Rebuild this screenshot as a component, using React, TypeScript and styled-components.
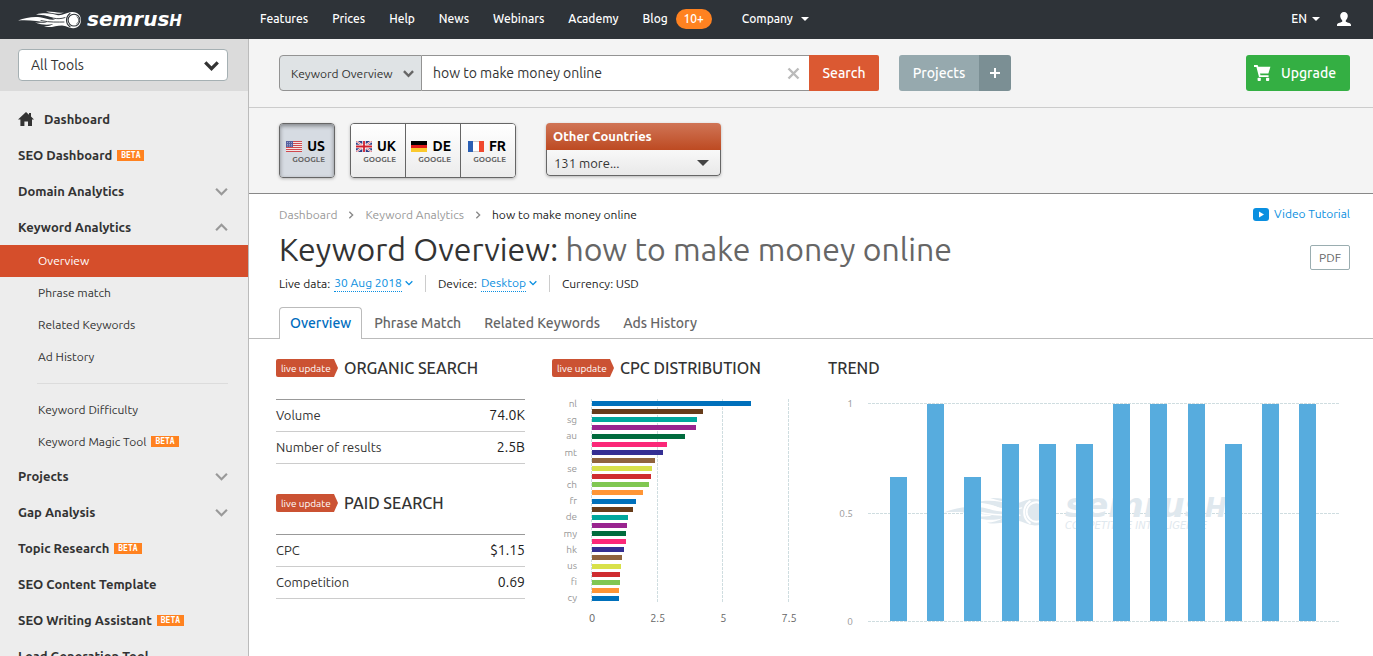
import React from "react";
import styled, { createGlobalStyle, css } from "styled-components";

const GlobalStyle = createGlobalStyle`
  *, *::before, *::after { box-sizing: border-box; }
  body {
    margin: 0;
    background: #fff;
    color: #333;
    font-family: Ubuntu, "Noto Sans", "Open Sans", sans-serif;
    font-size: 12px;
  }
  button, input, select { font-family: inherit; }
  a { color: inherit; text-decoration: none; }
`;

/* ---------- page frame ---------- */

const Page = styled.div`
  display: flex;
  flex-direction: column;
  height: 100vh;
  overflow: hidden;
`;

const Body = styled.div`
  flex: 1;
  min-height: 0;
  display: grid;
  grid-template-columns: 249px 1fr;
`;

/* ---------- top bar ---------- */

const TopBar = styled.header`
  flex: none;
  display: flex;
  align-items: center;
  height: 39px;
  padding: 0 22px 2px 18px;
  background: #2e3338;
  color: #fff;
`;

const LogoLink = styled.a`
  display: flex;
  align-items: center;
  gap: 5px;
  width: 242px;
  padding-top: 2px;
`;

const Wordmark = styled.span`
  font: italic bold 20px/20px "DejaVu Sans", sans-serif;
`;

const WordmarkCap = styled.span`
  font-size: 15px;
`;

const Nav = styled.nav`
  flex: 1;
  display: flex;
  align-items: center;
  gap: 24px;
`;

const NavLink = styled.a`
  display: inline-flex;
  align-items: center;
  gap: 8px;
  font-size: 12px;
  font-weight: 500;
`;

const CountBadge = styled.span`
  display: inline-block;
  width: 36px;
  margin-right: 6px;
  border-radius: 10px;
  background: #ff8220;
  font-size: 12px;
  line-height: 20px;
  text-align: center;
`;

const TopButton = styled.button`
  display: inline-flex;
  align-items: center;
  gap: 5px;
  margin-left: 17px;
  padding: 0;
  border: 0;
  background: none;
  color: #fff;
  font-size: 12px;
  font-weight: 500;
`;

/* ---------- sidebar ---------- */

const Sidebar = styled.aside`
  min-height: 0;
  overflow-y: auto;
  scrollbar-width: none;
  border-right: 1px solid #bbb;
  background: #ededed;
`;

const ToolPicker = styled.div`
  padding: 10px 20px 10px 18px;
  background: #dbdbdb;
`;

const SelectBox = styled.div`
  position: relative;
  display: grid;
  align-items: center;
  svg { position: absolute; right: 9px; pointer-events: none; }
`;

const ToolSelect = styled.select`
  appearance: none;
  width: 100%;
  height: 32px;
  padding: 0 12px;
  border: 1px solid #a5b0b3;
  border-radius: 4px;
  background: #fff;
  color: #333;
  font-size: 14px;
`;

const SideList = styled.ul`
  list-style: none;
  margin: 0;
  padding: 0;
`;

const SideLink = styled.a`
  display: flex;
  align-items: center;
  gap: 10px;
  height: 36px;
  padding: 0 20px 0 18px;
  font-size: 13px;
  font-weight: 700;
  color: #333;
`;

const SideText = styled.span`
  flex: 1;
  display: flex;
  align-items: center;
`;

const SubLink = styled.a<{ $active?: boolean }>`
  display: flex;
  align-items: center;
  height: 32px;
  padding: 0 0 2px 38px;
  font-size: 12px;
  color: ${(p) => (p.$active ? "#fff" : "#333")};
  background: ${(p) => (p.$active ? "#d54e2b" : "transparent")};
`;

const SideDivider = styled.li`
  height: 1px;
  margin: 10px 20px 10px 37px;
  background: #dcdcdc;
`;

const Beta = styled.span`
  margin-left: 5px;
  padding: 0 4px;
  background: #ff8220;
  color: #fff;
  font: bold 8px/11px "DejaVu Sans Mono", monospace;
`;

const SideSpace = styled.div`
  height: 10px;
`;

/* ---------- main column ---------- */

const Main = styled.main`
  min-width: 0;
  min-height: 0;
  overflow: hidden;
`;

const SearchBar = styled.form`
  display: flex;
  padding: 16px 23px 16px 30px;
  border-bottom: 1px solid #ccc;
  background: #f4f4f4;
`;

const ScopeBox = styled(SelectBox)`
  width: 143px;
  svg { right: 8px; }
`;

const ScopeSelect = styled.select`
  appearance: none;
  width: 100%;
  height: 36px;
  padding: 0 11px;
  border: 1px solid #939393;
  border-radius: 4px 0 0 4px;
  background: #dfe3e5;
  color: #333;
  font-size: 12px;
`;

const QueryBox = styled.div`
  flex: 0 1 387px;
  display: flex;
  align-items: center;
  height: 36px;
  padding: 0 9px 0 11px;
  border: solid #939393;
  border-width: 1px 0;
  background: #fff;
`;

const QueryInput = styled.input`
  flex: 1;
  min-width: 0;
  padding: 0;
  border: 0;
  outline: 0;
  color: #333;
  font-size: 14px;
`;

const ClearButton = styled.button`
  display: flex;
  padding: 0;
  border: 0;
  background: none;
`;

const BarButton = styled.button<{ $bg: string; $width: number; $radius: string }>`
  flex: none;
  display: flex;
  align-items: center;
  justify-content: center;
  gap: 10px;
  width: ${(p) => p.$width}px;
  height: 36px;
  padding: 0;
  border: 0;
  border-radius: ${(p) => p.$radius};
  background: ${(p) => p.$bg};
  color: #fff;
  font-size: 14px;
  font-weight: 500;
`;

const UpgradeButton = styled(BarButton)`
  justify-content: flex-start;
  padding-left: 8px;
`;

const ButtonGroup = styled.div`
  display: flex;
  margin: 0 auto 0 20px;
`;

const Countries = styled.section`
  display: flex;
  align-items: flex-start;
  padding: 15px 30px;
  border-bottom: 1px solid #888;
  background: #f4f4f4;
`;

const CountryGroup = styled.div`
  display: flex;
  margin-right: 15px;
  border: 1px solid #666;
  border-radius: 4px;
  overflow: hidden;
  box-shadow: 0 1px 3px rgba(0, 0, 0, 0.25);
  & + & { margin-right: 30px; }
`;

const Country = styled.button<{ $selected?: boolean }>`
  display: flex;
  flex-direction: column;
  align-items: flex-end;
  justify-content: center;
  width: 54px;
  height: 53px;
  padding: 2px 9px 0 0;
  border: 0;
  background: linear-gradient(#fff, #ececec);
  & + & {
    width: 55px;
    border-left: 1px solid #666;
  }
  ${(p) =>
    p.$selected &&
    css`
      background: #d6dbe2;
      box-shadow: inset 0 2px 4px rgba(0, 0, 0, 0.4);
    `}
`;

const CountryCode = styled.span`
  display: flex;
  align-items: center;
  gap: 5px;
  color: #000;
  font-size: 14px;
  line-height: 16px;
  font-weight: 700;
`;

const Engine = styled.span`
  color: #666;
  font-size: 8px;
  line-height: 11px;
  font-weight: 700;
`;

const OtherCountries = styled.div`
  width: 175px;
  border-radius: 4px;
  overflow: hidden;
  box-shadow: 0 1px 3px rgba(0, 0, 0, 0.25);
`;

const OtherTitle = styled.label`
  display: block;
  padding: 0 7px;
  background: linear-gradient(#d07556, #bd4a22);
  color: #fff;
  font-size: 13px;
  line-height: 27px;
  font-weight: 700;
`;

const OtherSelect = styled.select`
  appearance: none;
  width: 100%;
  height: 26px;
  padding: 0 7px;
  border: 1px solid #666;
  border-top: 0;
  border-radius: 0 0 4px 4px;
  background: linear-gradient(#f8f8f8, #e9e9e9);
  color: #333;
  font-size: 13px;
`;

const OtherBox = styled(SelectBox)`
  svg { right: 12px; }
`;

/* ---------- report heading ---------- */

const Heading = styled.div`
  padding: 10px 23px 0 30px;
`;

const HeadRow = styled.div`
  display: flex;
  align-items: flex-start;
  justify-content: space-between;
`;

const Crumbs = styled.nav`
  display: flex;
  align-items: center;
  gap: 10px;
  font-size: 12px;
  line-height: 22px;
  color: #222;
  a { color: #999; }
`;

const VideoLink = styled.a`
  display: flex;
  align-items: center;
  gap: 5px;
  color: #0a8fe0;
  font-size: 12px;
  line-height: 20px;
`;

const Title = styled.h1`
  margin: 0;
  color: #333;
  font-size: 32px;
  line-height: 46px;
  font-weight: 400;
  white-space: nowrap;
  span { color: #666; }
`;

const PdfButton = styled.button`
  width: 40px;
  height: 25px;
  margin-top: 19px;
  padding: 0;
  border: 1px solid #9aadb0;
  border-radius: 2px;
  background: #fff;
  color: #666;
  font-size: 12px;
`;

const Meta = styled.div`
  display: flex;
  align-items: center;
  height: 18px;
  margin-top: 2px;
  color: #222;
  font-size: 12px;
`;

const MetaItem = styled.span`
  display: inline-flex;
  align-items: center;
  line-height: 17px;
  & + & {
    margin-left: 12px;
    padding-left: 12px;
    border-left: 1px solid #ccc;
  }
`;

const MetaPick = styled.button`
  display: inline-flex;
  align-items: center;
  gap: 3px;
  margin-left: 4px;
  padding: 0;
  border: 0;
  background: none;
  color: #0a8fe0;
  font-size: 12px;
  line-height: 16px;
  span { border-bottom: 1px dotted #0a8fe0; }
`;

const Tabs = styled.nav`
  display: flex;
  gap: 1px;
  height: 32px;
  margin-top: 15px;
  padding-left: 30px;
  border-bottom: 1px solid #bbb;
`;

const Tab = styled.a<{ $active?: boolean }>`
  height: 32px;
  padding: 0 11px;
  color: #666;
  font-size: 14px;
  line-height: 32px;
  font-weight: 500;
  ${(p) =>
    p.$active &&
    css`
      padding: 0 10px;
      border: 1px solid #bbb;
      border-bottom: 0;
      border-radius: 4px 4px 0 0;
      background: #fff;
      color: #006dbe;
      line-height: 30px;
    `}
`;

/* ---------- report panels ---------- */

const Panels = styled.div`
  display: grid;
  grid-template-columns: 249fr 249fr 518fr;
  gap: 27px;
  padding: 15px 27px;
`;

const Panel = styled.section`
  min-width: 0;
  & + & { margin-top: 25px; }
`;

const PanelTitle = styled.h2`
  display: flex;
  align-items: center;
  gap: 6px;
  height: 28px;
  margin: 0;
  color: #333;
  font-size: 16px;
  line-height: 18px;
  font-weight: 500;
  white-space: nowrap;
`;

const LiveTag = styled.span`
  width: 62px;
  padding: 1px 0 0 5px;
  border-radius: 2px;
  clip-path: polygon(0 0, 58px 0, 100% 50%, 58px 100%, 0 100%);
  background: #cb5233;
  color: #fff;
  font-size: 10px;
  font-weight: 400;
  line-height: 17px;
`;

const Stats = styled.table`
  width: 100%;
  margin-top: 17px;
  border-spacing: 0;
  border-top: 1px solid #999;
  th, td {
    height: 32px;
    padding: 0 0 2px;
    border-bottom: 1px solid #ccc;
  }
  th {
    font-size: 13px;
    font-weight: 400;
    text-align: left;
  }
  td {
    color: #222;
    font-size: 14px;
    text-align: right;
  }
`;

const Chart = styled.svg`
  display: block;
  width: 100%;
  height: auto;
`;

const ChartLabel = styled.text`
  fill: #999;
  font-size: 10px;
`;

const AxisLabel = styled.text`
  fill: #666;
  font-size: 11px;
`;

const WatermarkName = styled.text`
  font: italic bold 34px "DejaVu Sans", sans-serif;
`;

const WatermarkTag = styled.text`
  font: italic 10px "DejaVu Sans", sans-serif;
`;

/* ---------- drawings ---------- */

const FireballShape = ({ ink, gap }: { ink: string; gap: string }) => (
  <g>
    <g fill={ink}>
      <path d="M0 9.4C7 6.6 15 5.4 22 6.2C28 6.9 31 9.3 37 8.6C32 5.2 26 3.6 18 3.4C27 1.2 34 2.6 40 4.2C45 4.6 48 1.6 54 1C60 .8 63 4.6 63 9.1C63 14 60 17.4 55 17.2C50 16.8 48 14.6 44 14.4C38 14.4 33 17.2 26 15.6C30 15.2 33 14.4 35.4 13C29 14.4 24 14 17 11.6C22 12 26 12 29 11C20 10.6 12 8.4 0 9.4Z" />
      <path d="M28 .6C35 .2 40 2.6 46 1.4C42 3.6 35 3 28 .6Z" />
    </g>
    <g fill="none" stroke={gap} strokeLinecap="round">
      <path d="M25 4.8C33 5.8 38 9.6 47 6.6" strokeWidth=".9" />
      <path d="M23 9.6C32 11.6 40 11 46 11" strokeWidth=".9" />
      <path d="M52 2.6C47.4 6 47.4 12.4 52 15.8" strokeWidth="1.2" />
    </g>
    <circle cx="56" cy="9.1" r="5.9" fill={ink} stroke={gap} strokeWidth="1.1" />
    <path d="M58.6 5.4A4.4 4.4 0 0 1 58.4 13" fill="none" stroke={gap} strokeWidth=".8" />
  </g>
);

const Chevron = ({ size, color, width = 2, turn = 0 }: { size: number; color: string; width?: number; turn?: number }) => (
  <svg width={size} height={size} viewBox="0 0 12 12" aria-hidden="true">
    <path d="M1 3.5L6 8.5L11 3.5" fill="none" stroke={color} strokeWidth={width} transform={`rotate(${turn} 6 6)`} />
  </svg>
);

const Caret = ({ width, color }: { width: number; color: string }) => (
  <svg width={width} height={width / 2} viewBox="0 0 8 4" aria-hidden="true">
    <path d="M0 0H8L4 4Z" fill={color} />
  </svg>
);

const Flag = ({ code }: { code: string }) => (
  <svg width="16" height="11" viewBox="0 0 16 11" aria-hidden="true">
    {code === "US" && (
      <>
        <rect width="16" height="11" fill="#f4e6e6" />
        <path d="M0 .5H16M0 2.5H16M0 4.5H16M0 6.5H16M0 8.5H16M0 10.5H16" stroke="#cf4a50" />
        <rect width="7" height="6" fill="#5560a0" />
        <path d="M1 1.5H7M1 3.5H7M1 5H7" stroke="#b9bfdd" strokeWidth=".7" strokeDasharray="1 1" />
      </>
    )}
    {code === "UK" && (
      <>
        <rect width="16" height="11" fill="#2f3f86" />
        <path d="M0 0L16 11M16 0L0 11" stroke="#fff" strokeWidth="2" />
        <path d="M0 0L16 11M16 0L0 11" stroke="#d13a46" strokeWidth=".7" />
        <path d="M8 0V11M0 5.5H16" stroke="#fff" strokeWidth="3.4" />
        <path d="M8 0V11M0 5.5H16" stroke="#d1202e" strokeWidth="1.8" />
      </>
    )}
    {code === "DE" && (
      <>
        <rect width="16" height="4" fill="#000" />
        <rect y="4" width="16" height="4" fill="#e01b1b" />
        <rect y="7" width="16" height="4" fill="#fbc92d" />
      </>
    )}
    {code === "FR" && (
      <>
        <rect width="16" height="11" fill="#fff" />
        <rect width="5" height="11" fill="#2a5fb4" />
        <rect x="11" width="5" height="11" fill="#f0492f" />
        <path d="M5 .5H11M5 10.5H11" stroke="#ccc" />
      </>
    )}
  </svg>
);

const HomeIcon = () => (
  <svg width="16" height="14" viewBox="0 0 16 14" aria-hidden="true">
    <path d="M8 0L11 2.7V1H13V4.6L16 7.4H14V14H10V9.4H6.4V14H2.4V7.4H0Z" fill="#333" />
  </svg>
);

const UserIcon = () => (
  <svg width="14" height="14" viewBox="0 0 14 14" aria-hidden="true">
    <path d="M7 0C9.4 0 10.9 1.7 10.8 4C10.7 6 9.8 7.3 8.8 8.3V9.8C10.8 10.8 14 11 14 13V14H0V13C0 11 3.2 10.8 5.2 9.8V8.3C4.2 7.3 3.3 6 3.2 4C3.1 1.7 4.6 0 7 0Z" fill="#fff" />
  </svg>
);

const CartIcon = () => (
  <svg width="17" height="16" viewBox="0 0 17 16" aria-hidden="true">
    <path d="M0 0H3.600L4.300 1.800H16.400L14.400 8.600H6L6.500 10.200H14.600V12H5L2.400 2H0Z" fill="#fff" />
    <rect x="3.600" y="12.800" width="3.200" height="3.200" rx=".8" fill="#fff" />
    <rect x="12" y="12.800" width="3.200" height="3.200" rx=".8" fill="#fff" />
  </svg>
);

/* ---------- data ---------- */

const navItems = ["Features", "Prices", "Help", "News", "Webinars", "Academy"];

const palette = [
  "#0070bb", "#663c1a", "#00a79d", "#99248f", "#006b3d", "#fb2878",
  "#342f93", "#8f643e", "#d8e14a", "#cf2c30", "#80c752", "#ff9535",
];

const cpcValues = [
  159, 111, 105, 104, 93, 75, 71, 63, 60, 59, 57, 51, 44, 41, 36, 35, 34, 34, 32, 30, 29, 28, 28, 27, 27,
];
const cpcLabels = ["nl", "sg", "au", "mt", "se", "ch", "fr", "de", "my", "hk", "us", "fi", "cy"];
const cpcTicks = ["0", "2.5", "5", "7.5"];

const trendValues = [144, 217, 144, 177, 177, 177, 217, 217, 217, 177, 217, 217];

/* ---------- sections ---------- */

const SideItem = ({ label, home, beta, fold }: { label: string; home?: boolean; beta?: boolean; fold?: "open" | "closed" }) => (
  <li>
    <SideLink href="#">
      {home && <HomeIcon />}
      <SideText>
        {label}
        {beta && <Beta>BETA</Beta>}
      </SideText>
      {fold && <Chevron size={13} color="#999" turn={fold === "open" ? 180 : 0} />}
    </SideLink>
  </li>
);

const CpcChart = () => (
  <Chart viewBox="0 0 249 260" role="img" aria-label="CPC distribution">
    {cpcTicks.map((t, i) => (
      <g key={t}>
        <path d={`M${Math.round(40 + i * 65.7) - 0.5} 17V221`} stroke="#cfdde0" strokeDasharray="3 1" />
        <AxisLabel x={40 + i * 65.7} y="240" textAnchor="middle">{t}</AxisLabel>
      </g>
    ))}
    {cpcValues.map((v, i) => (
      <rect key={i} x="40" y={Math.round(19 + i * 8.13)} width={v} height="5" fill={palette[i % 12]} />
    ))}
    {cpcLabels.map((l, i) => (
      <ChartLabel key={l} x="25" y={25 + i * 16.2} textAnchor="end">{l}</ChartLabel>
    ))}
  </Chart>
);

const TrendChart = () => (
  <Chart viewBox="0 0 518 260" role="img" aria-label="Trend">
    <clipPath id="mark"><rect x="100" y="100" width="298" height="60" /></clipPath>
    {[["1", 21.5], ["0.5", 131.5], ["0", 239.5]].map(([label, y]) => (
      <g key={label}>
        <path d={`M40 ${y}H511`} stroke="#cfdde0" strokeDasharray="3 1" />
        <ChartLabel x="25" y={Number(y) + 3} textAnchor="end">{label}</ChartLabel>
      </g>
    ))}
    <g fill="#dfe8ee" clipPath="url(#mark)">
      <g transform="translate(116 115) scale(1.65)">
        <FireballShape ink="#dfe8ee" gap="#fff" />
      </g>
      <WatermarkName x="237" y="135">semrus<tspan fontSize="26">H</tspan></WatermarkName>
      <WatermarkTag x="237" y="147">COMPETITIVE INTELLIGENCE</WatermarkTag>
    </g>
    {trendValues.map((v, i) => (
      <rect key={i} x={Math.round(62 + i * 37.2)} y={239 - v} width="17" height={v} fill="#57acde" />
    ))}
  </Chart>
);

const StatsTable = ({ rows }: { rows: [string, string][] }) => (
  <Stats>
    <tbody>
      {rows.map(([name, value]) => (
        <tr key={name}>
          <th scope="row">{name}</th>
          <td>{value}</td>
        </tr>
      ))}
    </tbody>
  </Stats>
);

export default function App() {
  return (
    <Page>
      <GlobalStyle />
      <TopBar>
        <LogoLink href="#" aria-label="semrush">
          <svg width="64" height="18" viewBox="0 0 64 18" aria-hidden="true">
            <FireballShape ink="#fff" gap="#2e3338" />
          </svg>
          <Wordmark>semrus<WordmarkCap>H</WordmarkCap></Wordmark>
        </LogoLink>
        <Nav>
          {navItems.map((n) => (
            <NavLink key={n} href="#">{n}</NavLink>
          ))}
          <NavLink href="#">Blog <CountBadge>10+</CountBadge></NavLink>
          <NavLink href="#">Company <Caret width={8} color="#fff" /></NavLink>
        </Nav>
        <TopButton>EN <Caret width={8} color="#fff" /></TopButton>
        <TopButton aria-label="Account"><UserIcon /></TopButton>
      </TopBar>

      <Body>
        <Sidebar>
          <ToolPicker>
            <SelectBox>
              <ToolSelect aria-label="Tools" defaultValue="All Tools"><option>All Tools</option></ToolSelect>
              <Chevron size={15} color="#333" width={2.6} />
            </SelectBox>
          </ToolPicker>
          <SideSpace />
          <SideList>
            <SideItem label="Dashboard" home />
            <SideItem label="SEO Dashboard" beta />
            <SideItem label="Domain Analytics" fold="closed" />
            <SideItem label="Keyword Analytics" fold="open" />
            <li>
              <SideList>
                <li><SubLink href="#" $active>Overview</SubLink></li>
                <li><SubLink href="#">Phrase match</SubLink></li>
                <li><SubLink href="#">Related Keywords</SubLink></li>
                <li><SubLink href="#">Ad History</SubLink></li>
                <SideDivider />
                <li><SubLink href="#">Keyword Difficulty</SubLink></li>
                <li><SubLink href="#">Keyword Magic Tool<Beta>BETA</Beta></SubLink></li>
              </SideList>
            </li>
            <SideItem label="Projects" fold="closed" />
            <SideItem label="Gap Analysis" fold="closed" />
            <SideItem label="Topic Research" beta />
            <SideItem label="SEO Content Template" />
            <SideItem label="SEO Writing Assistant" beta />
            <SideItem label="Lead Generation Tool" />
          </SideList>
        </Sidebar>

        <Main>
          <SearchBar onSubmit={(e) => e.preventDefault()}>
            <ScopeBox>
              <ScopeSelect aria-label="Report" defaultValue="Keyword Overview"><option>Keyword Overview</option></ScopeSelect>
              <Chevron size={11} color="#666" width={2.6} />
            </ScopeBox>
            <QueryBox>
              <QueryInput aria-label="Keyword" defaultValue="how to make money online" />
              <ClearButton type="button" aria-label="Clear">
                <svg width="13" height="13" viewBox="0 0 13 13" aria-hidden="true">
                  <path d="M1.500 1.500L11.500 11.500M11.500 1.500L1.500 11.500" stroke="#bbb" strokeWidth="2.400" />
                </svg>
              </ClearButton>
            </QueryBox>
            <BarButton type="submit" $bg="#db5932" $width={70} $radius="0 2px 2px 0">Search</BarButton>
            <ButtonGroup>
              <BarButton type="button" $bg="#96a9ae" $width={80} $radius="3px 0 0 3px">Projects</BarButton>
              <BarButton type="button" $bg="#7b8f94" $width={32} $radius="0 3px 3px 0" aria-label="Add project">
                <svg width="12" height="12" viewBox="0 0 12 12" aria-hidden="true">
                  <path d="M6 1V11M1 6H11" stroke="#fff" strokeWidth="2" />
                </svg>
              </BarButton>
            </ButtonGroup>
            <UpgradeButton type="button" $bg="#34af43" $width={104} $radius="3px"><CartIcon />Upgrade</UpgradeButton>
          </SearchBar>

          <Countries>
            <CountryGroup>
              <Country $selected>
                <CountryCode><Flag code="US" />US</CountryCode>
                <Engine>GOOGLE</Engine>
              </Country>
            </CountryGroup>
            <CountryGroup>
              {["UK", "DE", "FR"].map((c) => (
                <Country key={c}>
                  <CountryCode><Flag code={c} />{c}</CountryCode>
                  <Engine>GOOGLE</Engine>
                </Country>
              ))}
            </CountryGroup>
            <OtherCountries>
              <OtherTitle htmlFor="other">Other Countries</OtherTitle>
              <OtherBox>
                <OtherSelect id="other" defaultValue="131 more..."><option>131 more...</option></OtherSelect>
                <Caret width={12} color="#444" />
              </OtherBox>
            </OtherCountries>
          </Countries>

          <Heading>
            <HeadRow>
              <Crumbs aria-label="Breadcrumb">
                <a href="#">Dashboard</a>
                <Chevron size={8} color="#888" turn={-90} />
                <a href="#">Keyword Analytics</a>
                <Chevron size={8} color="#888" turn={-90} />
                <span>how to make money online</span>
              </Crumbs>
              <VideoLink href="#">
                <svg width="16" height="13" viewBox="0 0 16 13" aria-hidden="true">
                  <rect width="16" height="13" rx="3" fill="#0a8fe0" />
                  <path d="M6 3.500L11 6.500L6 9.500Z" fill="#fff" />
                </svg>
                Video Tutorial
              </VideoLink>
            </HeadRow>
            <HeadRow>
              <Title>Keyword Overview: <span>how to make money online</span></Title>
              <PdfButton>PDF</PdfButton>
            </HeadRow>
            <Meta>
              <MetaItem>Live data:<MetaPick><span>30 Aug 2018</span><Chevron size={8} color="#0a8fe0" /></MetaPick></MetaItem>
              <MetaItem>Device:<MetaPick><span>Desktop</span><Chevron size={8} color="#0a8fe0" /></MetaPick></MetaItem>
              <MetaItem>Currency: USD</MetaItem>
            </Meta>
          </Heading>

          <Tabs aria-label="Report sections">
            <Tab href="#" $active>Overview</Tab>
            <Tab href="#">Phrase Match</Tab>
            <Tab href="#">Related Keywords</Tab>
            <Tab href="#">Ads History</Tab>
          </Tabs>

          <Panels>
            <div>
              <Panel>
                <PanelTitle><LiveTag>live update</LiveTag>ORGANIC SEARCH</PanelTitle>
                <StatsTable rows={[["Volume", "74.0K"], ["Number of results", "2.5B"]]} />
              </Panel>
              <Panel>
                <PanelTitle><LiveTag>live update</LiveTag>PAID SEARCH</PanelTitle>
                <StatsTable rows={[["CPC", "$1.15"], ["Competition", "0.69"]]} />
              </Panel>
            </div>
            <div>
              <PanelTitle><LiveTag>live update</LiveTag>CPC DISTRIBUTION</PanelTitle>
              <CpcChart />
            </div>
            <div>
              <PanelTitle>TREND</PanelTitle>
              <TrendChart />
            </div>
          </Panels>
        </Main>
      </Body>
    </Page>
  );
}
